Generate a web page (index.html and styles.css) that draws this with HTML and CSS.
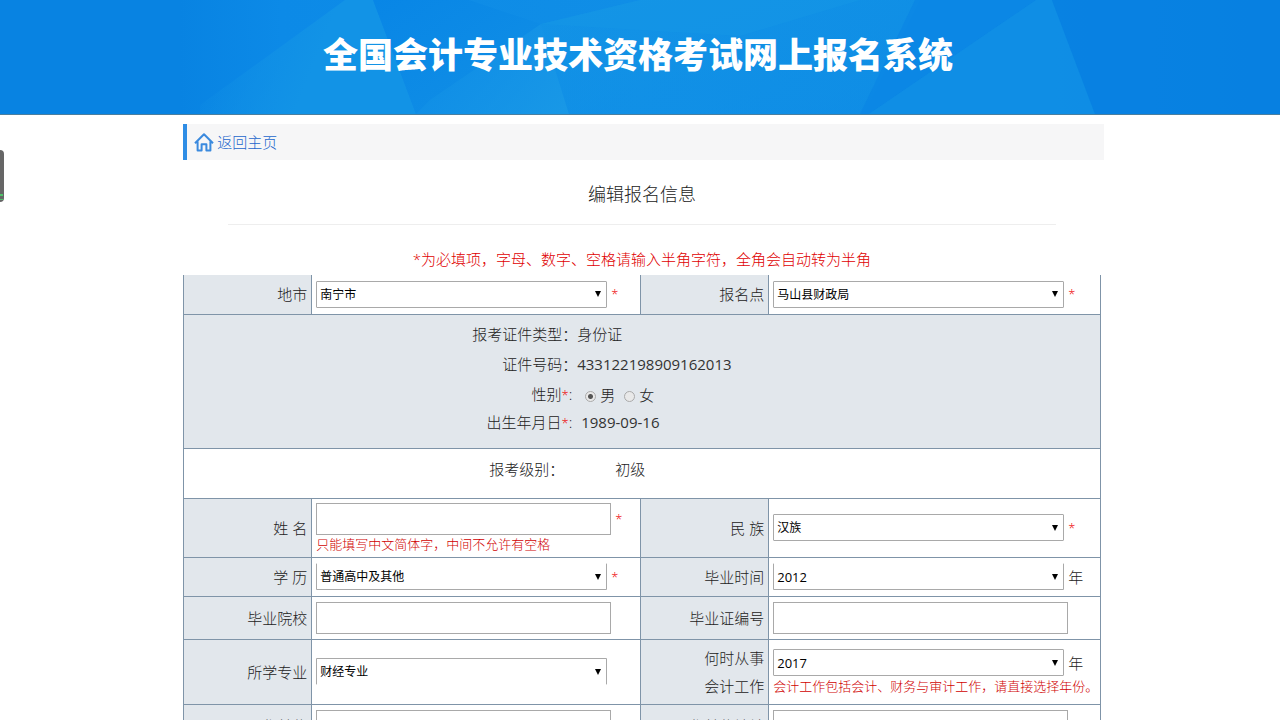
FILE: index.html
```html
<!DOCTYPE html>
<html lang="zh-CN">
<head>
<meta charset="utf-8">
<meta name="viewport" content="width=device-width, initial-scale=1">
<title>全国会计专业技术资格考试网上报名系统</title>
<link rel="stylesheet" href="styles.css">
</head>
<body>
<header class="banner">
  <svg class="banner-art" viewBox="0 0 1280 114" preserveAspectRatio="none" aria-hidden="true">
    <defs>
      <linearGradient id="base" x1="0" x2="1" y1="0" y2="0">
        <stop offset="0" stop-color="#0883e2"/>
        <stop offset=".14" stop-color="#0883e2"/>
        <stop offset=".22" stop-color="#0c8ae7"/>
        <stop offset=".5" stop-color="#108ee6"/>
        <stop offset=".8" stop-color="#0d8be5"/>
        <stop offset="1" stop-color="#0783e1"/>
      </linearGradient>
      <linearGradient id="left" gradientUnits="userSpaceOnUse" x1="200" x2="300" y1="60" y2="100">
        <stop offset="0" stop-color="#1292e5" stop-opacity="0"/>
        <stop offset="1" stop-color="#1293e6"/>
      </linearGradient>
      <linearGradient id="dark" x1="0" x2="1" y1="0" y2="1">
        <stop offset="0" stop-color="#0886e6"/>
        <stop offset="1" stop-color="#118fe5"/>
      </linearGradient>
      <linearGradient id="light" gradientUnits="userSpaceOnUse" x1="470" x2="560" y1="40" y2="114">
        <stop offset="0" stop-color="#1190e6"/>
        <stop offset="1" stop-color="#1c9ce6"/>
      </linearGradient>
      <linearGradient id="center" x1="0" x2="1" y1="0" y2="1">
        <stop offset="0" stop-color="#1699e5"/>
        <stop offset="1" stop-color="#0f8ee6"/>
      </linearGradient>
    </defs>
    <path fill="url(#base)" d="M0 0H1280V114H0z"/>
    <path fill="url(#left)" d="M200 114V105L345 0H373L416 114z"/>
    <path fill="url(#dark)" d="M373 0H469L541 24L416 114z"/>
    <path fill="url(#light)" d="M541 24L569 114H416L430 100z" opacity=".7"/>
    <path fill="url(#center)" d="M541 24L640 0H920L864 114H569z" opacity=".45"/>
    <path fill="#1699e5" d="M541 24L640 0H860L740 36z" opacity=".4"/>
    <path fill="#0b86e4" d="M915 0H1036L869 114H860z" opacity=".75"/>
    <path fill="#108fe5" d="M869 114L1036 0H1052L1095 114z" opacity=".8"/>
    <path fill="#0780e1" d="M1052 0H1280V114H1095z" opacity=".8"/>
  </svg>
  <h1 class="banner-title">全国会计专业技术资格考试网上报名系统</h1>
</header>
<div class="side-tab" aria-hidden="true"><span class="side-tab-mark"></span></div>

<main class="page">
  <nav class="crumb">
    <a class="crumb-link" href="#">
      <svg class="crumb-icon" viewBox="0 0 20 19" aria-hidden="true">
        <path d="M1 10.2L10 1.2L19 10.2M3.6 8.5V17.5H7.6V11.2H12.4V17.5H16.4V8.5"/>
      </svg>
      <span>返回主页</span>
    </a>
  </nav>
  <h2 class="title">编辑报名信息</h2>
  <p class="notice">*为必填项，字母、数字、空格请输入半角字符，全角会自动转为半角</p>

  <form>
    <table class="form">
      <colgroup><col class="col-label"><col class="col-field"><col class="col-label"><col class="col-last"></colgroup>
      <tr class="row-s">
        <th><label for="city">地市</label></th>
        <td><div class="line"><select id="city"><option>南宁市</option></select><span class="req">*</span></div></td>
        <th><label for="site">报名点</label></th>
        <td><div class="line"><select id="site"><option>马山县财政局</option></select><span class="req">*</span></div></td>
      </tr>
      <tr>
        <td class="identity" colspan="4">
          <dl class="facts">
            <dt>报考证件类型：</dt><dd>身份证</dd>
            <dt>证件号码：</dt><dd class="digits">433122198909162013</dd>
            <dt class="marked">性别<span class="star">*</span>:</dt>
            <dd class="sex">
              <input type="radio" id="male" name="sex" checked><label for="male">男</label>
              <input type="radio" id="female" name="sex"><label for="female">女</label>
            </dd>
            <dt class="marked tight">出生年月日<span class="star">*</span>:</dt><dd class="digits tight birth">1989-09-16</dd>
          </dl>
        </td>
      </tr>
      <tr>
        <td class="level" colspan="4">
          <div class="level-line"><span>报考级别：</span><span>初级</span></div>
        </td>
      </tr>
      <tr class="row-name">
        <th><label for="name">姓 名</label></th>
        <td><div class="line"><input type="text" id="name"><span class="req">*</span></div><p class="hint">只能填写中文简体字，中间不允许有空格</p></td>
        <th><label for="nation">民 族</label></th>
        <td><div class="line"><select id="nation"><option>汉族</option></select><span class="req">*</span></div></td>
      </tr>
      <tr class="row-s">
        <th><label for="edu">学 历</label></th>
        <td><div class="line"><select id="edu" class="no-top"><option>普通高中及其他</option></select><span class="req">*</span></div></td>
        <th><label for="grad">毕业时间</label></th>
        <td><div class="line"><select id="grad" class="no-top year"><option>2012</option></select><span class="unit">年</span></div></td>
      </tr>
      <tr class="row-m">
        <th><label for="school">毕业院校</label></th>
        <td><div class="line"><input type="text" id="school"></div></td>
        <th><label for="cert">毕业证编号</label></th>
        <td><div class="line"><input type="text" id="cert"></div></td>
      </tr>
      <tr class="row-l">
        <th><label for="major">所学专业</label></th>
        <td><div class="line"><select id="major" class="no-bottom"><option>财经专业</option></select></div></td>
        <th><label for="since">何时从事<br>会计工作</label></th>
        <td><div class="line"><select id="since" class="year"><option>2017</option></select><span class="unit">年</span></div><p class="hint">会计工作包括会计、财务与审计工作，请直接选择年份。</p></td>
      </tr>
      <tr class="row-m">
        <th><label for="work">工作单位</label></th>
        <td><div class="line"><input type="text" id="work"></div></td>
        <th><label for="addr">工作单位地址</label></th>
        <td><div class="line"><input type="text" id="addr"></div></td>
      </tr>
    </table>
  </form>
</main>
</body>
</html>
```
FILE: styles.css
```css
* { box-sizing: border-box; }
html { height: 100%; overflow: hidden; }
body {
  height: 100%;
  margin: 0;
  overflow: hidden;
  background: #fff;
  color: #222;
  font: 15px/28px "Open Sans", "Noto Sans CJK SC", sans-serif;
  font-weight: 300;
}
.banner {
  position: relative;
  display: flex;
  align-items: center;
  justify-content: center;
  height: 115px;
  padding: 0 4px 4px 0;
  border-bottom: 1px solid #4b7f9f;
  background: #0a86e2;
}
.banner-art { position: absolute; inset: 0; width: 100%; height: 100%; }
.banner-title {
  position: relative;
  margin: 0;
  color: #fff;
  font-size: 35px;
  line-height: 52px;
  font-weight: 900;
}
.side-tab {
  position: absolute;
  left: 0;
  top: 150px;
  display: flex;
  align-items: flex-end;
  width: 4px;
  height: 52px;
  padding-bottom: 2px;
  border-radius: 0 4px 4px 0;
  background: #666;
}
.side-tab-mark { width: 3px; height: 6px; border: solid #4fc46a; border-width: 2px 0 1px; }
.page { width: 72%; min-width: 921px; margin: 0 auto; padding: 9px 0 0 4px; }
.crumb {
  display: flex;
  height: 36px;
  margin-right: -3px;
  border-left: 4px solid #2e8de5;
  background: #f6f6f7;
}
.crumb-link { display: flex; align-items: center; gap: 3px; padding-left: 7px; color: #2466cc; text-decoration: none; }
.crumb-icon { width: 20px; height: 19px; fill: none; stroke: #3b8ade; stroke-width: 2; stroke-linejoin: round; }
.title {
  height: 65px;
  margin: 0 45px;
  padding-top: 20px;
  border-bottom: 1px solid #eee;
  font-size: 18px;
  line-height: 28px;
  font-weight: 300;
  text-align: center;
}
.notice { margin: 20px 0 2px; color: #e00000; text-align: center; }
.form { width: 100%; border-collapse: collapse; table-layout: fixed; }
.col-label { width: 128px; }
.col-field { width: 329px; }
.form th, .form td { padding: 0 4px; border: 1px solid #7f94a8; font-weight: 300; }
.form tr:first-child > * { border-top: 0; }
.form th { background: #e2e7ec; text-align: right; }
.row-s > * { height: 39px; }
.row-m > * { height: 43px; }
.row-name > * { height: 59px; }
.row-l > * { height: 65px; }
.line { display: flex; align-items: center; gap: 4px; }
input[type="text"] { width: 295px; height: 32px; margin: 0; border: 1px solid #a9a9a9; background: #fff; }
select {
  width: 291px;
  height: 27px;
  padding: 0 4px 0 3px;
  appearance: none;
  border: 1px solid #a9a9a9;
  border-radius: 1px;
  background: #fff url("data:image/svg+xml,%3Csvg xmlns='http://www.w3.org/2000/svg' width='6' height='6'%3E%3Cpath d='M0 0H6L3 6z'/%3E%3C/svg%3E") no-repeat right 5px center;
  color: #000;
  font: 12px "Open Sans", "Noto Sans CJK SC", sans-serif;
}
select.year { font-size: 13px; }
select.no-top { border-top-color: transparent; }
select.no-bottom { border-bottom-color: transparent; }
.req { color: #e00; font-size: 13px; line-height: 20px; }
.star { color: #e00; font-size: 13px; }
.hint { margin: 0; color: #d00000; font-size: 13px; line-height: 18px; white-space: nowrap; }
.form .identity { height: 134px; padding-bottom: 8px; background: #e2e7ec; }
.facts { display: grid; grid-template-columns: 389px 1fr; row-gap: 2px; margin: 0; }
.facts dt { text-align: right; }
.facts dd { margin: 0; }
.facts .digits { font-weight: 400; color: #333; }
.facts .marked { padding-right: 5px; }
.facts .tight { line-height: 22px; }
.facts .birth { padding-left: 4px; }
.facts .sex { display: flex; align-items: center; gap: 4px; padding-left: 8px; }
.sex label + input { margin-left: 5px; }
input[type="radio"] {
  width: 11px;
  height: 11px;
  margin: 4px 0 0;
  appearance: none;
  border: 1px solid #aaa;
  border-radius: 50%;
  background: #e9e9e9;
}
input[type="radio"]:checked { background: radial-gradient(circle, #555 0 2px, #e9e9e9 3px); }
.form .level { height: 50px; padding-bottom: 8px; }
.level-line { display: grid; grid-template-columns: 126px 1fr; padding-left: 301px; }
```
